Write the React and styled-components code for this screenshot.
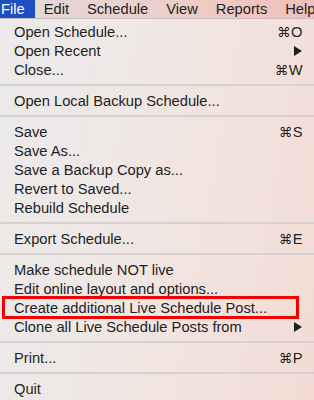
import React from "react";
import styled, { createGlobalStyle } from "styled-components";

const Global = createGlobalStyle`
  html, body { margin: 0; padding: 0; }
  body { font-family: "Liberation Sans", Arial, "DejaVu Sans", sans-serif; }
`;

const Screen = styled.div`
  width: 314px;
  height: 400px;
  overflow: hidden;
  background: linear-gradient(100deg, #ebeaea 0%, #eee8e6 35%, #f3e2dc 70%, #f2dbd5 100%);
  color: #1e1e1e;
  font-size: 14.7px;
`;

const MenuBar = styled.div`
  display: flex;
  height: 18px;
  border-bottom: 1px solid #c9c0bf;
  background: linear-gradient(90deg, #e3d9d8 0%, #ead1cc 45%, #f0c6c0 80%, #f0bfba 100%);
  white-space: nowrap;
`;

const BarItem = styled.div`
  display: flex;
  align-items: center;
  flex-shrink: 0;
  padding: 0 9px;
  line-height: 18px;
  ${(p) => p.$first && "padding-left: 1px; padding-right: 10px;"}
  ${(p) => p.$active && "background: #1d4fc2; color: #ffffff;"}
`;

const Menu = styled.div`
  display: flex;
  flex-direction: column;
  padding-top: 3px;
`;

const Item = styled.div`
  position: relative;
  display: flex;
  align-items: center;
  justify-content: space-between;
  height: 19px;
  padding: 0 11px 0 14px;
  white-space: nowrap;
  ${(p) =>
    p.$marked &&
    `
    &::after {
      content: "";
      position: absolute;
      left: 2px;
      right: 15px;
      top: -2px;
      bottom: -2px;
      border: 3px solid #f40000;
      pointer-events: none;
    }
  `}
`;

const Shortcut = styled.span`
  font-family: "DejaVu Sans", "Liberation Sans", sans-serif;
  font-size: 13.5px;
  letter-spacing: 0.5px;
`;

const Key = styled.span`
  font-family: "Liberation Sans", Arial, sans-serif;
  font-size: 14.7px;
`;

const Separator = styled.div`
  height: 12px;
  display: flex;
  align-items: center;
  &::before {
    content: "";
    flex: 1;
    height: 2px;
    background: #d6d1d0;
  }
`;

const ArrowIcon = () => (
  <svg width="8" height="10" viewBox="0 0 8 10" style={{ marginRight: 1 }}>
    <path d="M0 0 L8 5 L0 10 Z" fill="#1e1e1e" />
  </svg>
);

const groups = [
  [
    { label: "Open Schedule...", key: "O" },
    { label: "Open Recent", arrow: true },
    { label: "Close...", key: "W" },
  ],
  [{ label: "Open Local Backup Schedule..." }],
  [
    { label: "Save", key: "S" },
    { label: "Save As..." },
    { label: "Save a Backup Copy as..." },
    { label: "Revert to Saved..." },
    { label: "Rebuild Schedule" },
  ],
  [{ label: "Export Schedule...", key: "E" }],
  [
    { label: "Make schedule NOT live" },
    { label: "Edit online layout and options..." },
    { label: "Create additional Live Schedule Post...", marked: true },
    { label: "Clone all Live Schedule Posts from", arrow: true },
  ],
  [{ label: "Print...", key: "P" }],
  [{ label: "Quit" }],
];

export default function App() {
  return (
    <>
      <Global />
      <Screen>
        <MenuBar>
          <BarItem $first $active>File</BarItem>
          <BarItem>Edit</BarItem>
          <BarItem>Schedule</BarItem>
          <BarItem>View</BarItem>
          <BarItem>Reports</BarItem>
          <BarItem>Help</BarItem>
        </MenuBar>
        <Menu>
          {groups.map((g, gi) => (
            <React.Fragment key={gi}>
              {gi > 0 && <Separator />}
              {g.map((it) => (
                <Item key={it.label} $marked={it.marked}>
                  <span>{it.label}</span>
                  {it.key && (
                    <Shortcut>
                      ⌘<Key>{it.key}</Key>
                    </Shortcut>
                  )}
                  {it.arrow && <ArrowIcon />}
                </Item>
              ))}
            </React.Fragment>
          ))}
        </Menu>
      </Screen>
    </>
  );
}
